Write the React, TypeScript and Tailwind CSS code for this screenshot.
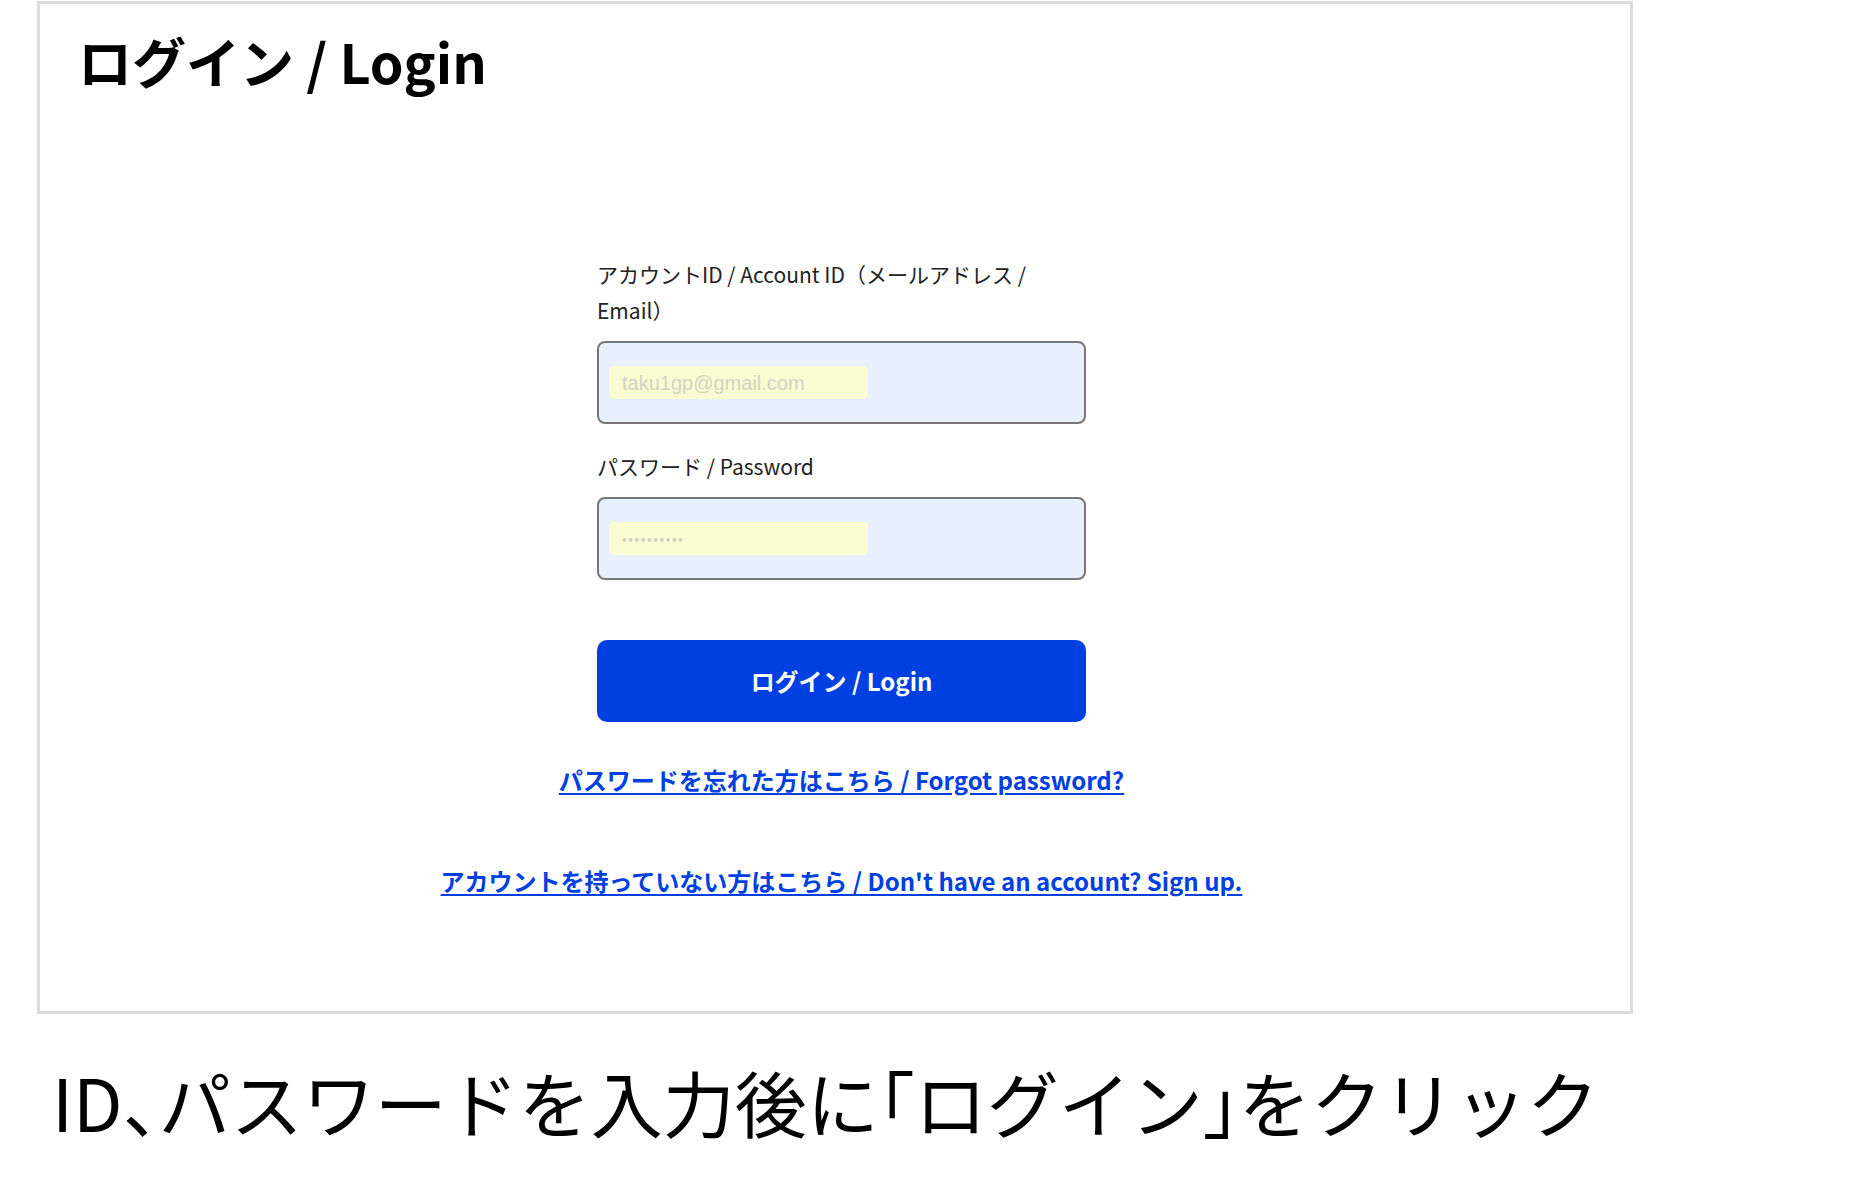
const jp = "font-['Noto_Sans_CJK_JP','Noto_Sans',sans-serif]";

const Field = ({
  label,
  value,
  secret,
}: {
  label: string;
  value: string;
  secret?: boolean;
}) => (
  <div>
    <label className="block text-[21px] leading-[36px] text-[#222]">{label}</label>
    <div className="mt-[13px] h-[83px] rounded-[8px] border-2 border-[#777] bg-[#e8f0fe] flex items-center pl-[10px]">
      <div className="h-[33px] w-[259px] rounded-[5px] bg-[#fafcd2] flex items-center pl-[13px]">
        {secret ? (
          <span className="text-[14px] tracking-[1.5px] text-[#cfcfbc]">{value}</span>
        ) : (
          <span className="font-['Liberation_Sans',Arial,sans-serif] text-[20px] text-[#d2d2c2]">
            {value}
          </span>
        )}
      </div>
    </div>
  </div>
);

// half-width punctuation in the caption
const Punct = ({ c }: { c: string }) => (
  <span className="[font-feature-settings:'halt']">{c}</span>
);

export default function App() {
  return (
    <div className={`min-h-screen bg-white ${jp}`}>
      {/* screenshot frame */}
      <div className="ml-[37px] mt-px w-[1596px] h-[1013px] border-[3px] border-[#dcdcdc]">
        <h1 className="pl-[38px] pt-[30px] text-[54px] leading-none font-bold text-black">
          ログイン / Login
        </h1>

        <div className="pl-[13px] flex flex-col items-center">
          <div className="mt-[168px] w-[489px]">
            <Field
              label="アカウントID / Account ID（メールアドレス / Email）"
              value="taku1gp@gmail.com"
            />
            <div className="mt-[24px]">
              <Field label="パスワード / Password" value="••••••••••" secret />
            </div>
            <button className="mt-[60px] w-full h-[82px] rounded-[10px] bg-[#003fe0] text-white text-[24px] font-bold">
              ログイン / Login
            </button>
          </div>

          <a
            href="#"
            className="mt-[40px] text-[24px] leading-[36px] font-bold text-[#0040e0] underline underline-offset-[3px]"
          >
            パスワードを忘れた方はこちら / Forgot password?
          </a>
          <a
            href="#"
            className="mt-[65px] text-[24px] leading-[36px] font-bold text-[#0040e0] underline underline-offset-[3px]"
          >
            アカウントを持っていない方はこちら / Don't have an account? Sign up.
          </a>
        </div>
      </div>

      <p className="pl-[52px] mt-[51px] text-[72px] leading-none text-black">
        ID<Punct c="、" />パスワードを入力後に<Punct c="「" />ログイン<Punct c="」" />をクリック
      </p>
    </div>
  );
}
